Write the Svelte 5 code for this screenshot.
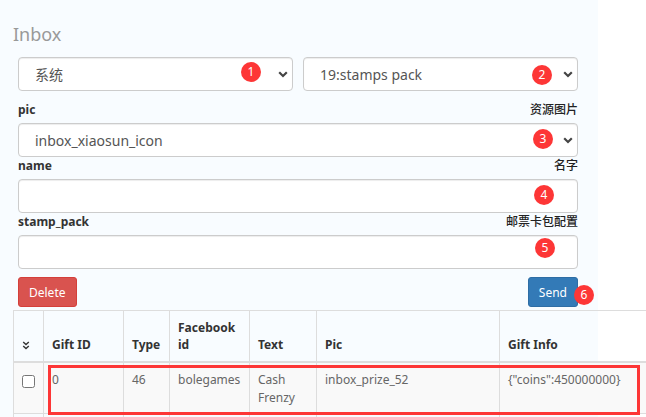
<script>
  const types = ['系统'];
  const gifts = ['19:stamps pack'];
  const pics = ['inbox_xiaosun_icon'];
  const rows = [
    { id: '0', type: '46', fb: 'bolegames', text: 'Cash Frenzy', pic: 'inbox_prize_52', info: '{"coins":450000000}' },
    { id: '', type: '', fb: '', text: '', pic: '', info: '' }
  ];
</script>

{#snippet chevron()}
  <svg class="chevron" viewBox="0 0 10 7" aria-hidden="true"><path d="M1.2 1.3 L5 5 L8.8 1.3" /></svg>
{/snippet}

<main>
  <div class="panel">
    <h1>Inbox</h1>
    <form onsubmit={(e) => e.preventDefault()}>
      <div class="pair">
        <div class="field">
          <select aria-label="Message type">
            {#each types as t}<option>{t}</option>{/each}
          </select>
          {@render chevron()}
          <span class="badge b1">1</span>
        </div>
        <div class="field">
          <select aria-label="Gift type">
            {#each gifts as g}<option>{g}</option>{/each}
          </select>
          {@render chevron()}
          <span class="badge b2">2</span>
        </div>
      </div>

      <label for="pic"><span>pic</span><span class="note">资源图片</span></label>
      <div class="field">
        <select id="pic">
          {#each pics as p}<option>{p}</option>{/each}
        </select>
        {@render chevron()}
        <span class="badge b3">3</span>
      </div>

      <label for="name"><span>name</span><span class="note">名字</span></label>
      <div class="field">
        <input id="name" type="text" />
        <span class="badge b4">4</span>
      </div>

      <label for="stamp"><span>stamp_pack</span><span class="note">邮票卡包配置</span></label>
      <div class="field">
        <input id="stamp" type="text" />
        <span class="badge b5">5</span>
      </div>

      <div class="actions">
        <button type="button" class="delete">Delete</button>
        <div class="send-wrap">
          <button type="submit" class="send">Send</button>
          <span class="badge b6">6</span>
        </div>
      </div>
    </form>

    <div class="table-wrap">
      <table>
        <colgroup>
          <col class="c-check" /><col class="c-id" /><col class="c-type" /><col class="c-fb" />
          <col class="c-text" /><col class="c-pic" /><col />
        </colgroup>
        <thead>
          <tr>
            <th class="check">
              <svg viewBox="0 0 8 9" aria-label="Expand all" role="img"><path d="M1.2 1 L4 3.6 L6.8 1 M1.2 5 L4 7.6 L6.8 5" /></svg>
            </th>
            <th>Gift ID</th><th>Type</th><th>Facebook id</th><th>Text</th><th>Pic</th><th>Gift Info</th>
          </tr>
        </thead>
        <tbody>
          {#each rows as r}
            <tr>
              <td class="check">{#if r.id}<input type="checkbox" aria-label="Select gift {r.id}" />{/if}</td>
              <td>{r.id}</td><td>{r.type}</td><td>{r.fb}</td><td>{r.text}</td><td>{r.pic}</td><td>{r.info}</td>
            </tr>
          {/each}
        </tbody>
      </table>
      <div class="highlight"></div>
    </div>
  </div>
</main>

<style>
  :global(body) { background: #fff; }
  * { box-sizing: border-box; }
  main {
    height: 100vh;
    overflow: hidden;
    padding-right: 48px;
    font: 13px/18px "Noto Sans", "Noto Sans CJK SC", sans-serif;
    color: #666;
  }
  .panel { min-height: 100%; padding: 22px 0 0 13px; background: #f8fcff; }
  h1 { margin: 0; font-size: 18px; line-height: 24px; font-weight: 400; color: #999; }
  form { padding: 11px 20px 0 5px; }
  .pair { display: grid; grid-template-columns: 1fr 1fr; gap: 10px; padding-bottom: 10px; }
  .field { position: relative; }
  select, input[type="text"] {
    display: block;
    width: 100%;
    height: 34px;
    padding: 0 32px 0 16px;
    border: 1px solid #ccc;
    border-radius: 4px;
    background: #fff;
    box-shadow: inset 0 1px 1px rgba(0, 0, 0, 0.075);
    color: #555;
    font-family: inherit;
    font-size: 14px;
    appearance: none;
  }
  .chevron { position: absolute; right: 5px; top: 14px; width: 10px; height: 7px; }
  .chevron path { fill: none; stroke: #444; stroke-width: 2.2; }
  label {
    display: flex;
    justify-content: space-between;
    height: 22px;
    line-height: 18px;
    font-size: 12px;
    font-weight: 700;
    color: #333;
  }
  .note { font-weight: 500; color: #222; }
  .badge {
    position: absolute;
    width: 20px;
    height: 20px;
    border-radius: 50%;
    background: #fd3636;
    color: #fff;
    font-size: 12px;
    line-height: 20px;
    text-align: center;
  }
  .b1 { right: 32px; top: 5px; }
  .b2 { right: 26px; top: 8px; }
  .b3 { right: 25px; top: 6px; }
  .b4 { right: 24px; top: 6px; }
  .b5 { right: 23px; top: 3px; }
  .b6 { right: -16px; top: 8px; }
  .actions { display: flex; justify-content: space-between; padding: 8px 0 3px; }
  .send-wrap { position: relative; }
  button {
    display: block;
    height: 30px;
    padding: 0 10px;
    border: 1px solid;
    border-radius: 3px;
    color: #fff;
    font-family: inherit;
    font-size: 12px;
  }
  .delete { background: #d9534f; border-color: #d43f3a; }
  .send { background: #337ab7; border-color: #2e6da4; }
  .table-wrap { position: relative; margin-right: -61px; }
  table { width: 100%; table-layout: fixed; border-collapse: collapse; }
  .c-check { width: 30px; }
  .c-id { width: 80px; }
  .c-type { width: 46px; }
  .c-fb { width: 80px; }
  .c-text { width: 67px; }
  .c-pic { width: 183px; }
  th, td { border: 1px solid #ddd; padding: 8px; text-align: left; }
  th { vertical-align: bottom; border-bottom-width: 2px; color: #333; font-size: 12px; font-weight: 700; line-height: 17px; }
  td { height: 51px; padding-bottom: 6px; vertical-align: top; font-size: 12px; }
  tbody tr:nth-child(odd) { background: #f9f9f9; }
  th.check svg { display: block; width: 8px; height: 9px; margin-bottom: 3px; }
  th.check path { fill: none; stroke: #333; stroke-width: 1.4; }
  td.check input { display: block; width: 13px; height: 13px; margin: 4px 0 0; }
  .highlight {
    position: absolute;
    left: 35px;
    right: 19px;
    top: 55px;
    height: 50px;
    border: 3px solid #fd3636;
  }
</style>
